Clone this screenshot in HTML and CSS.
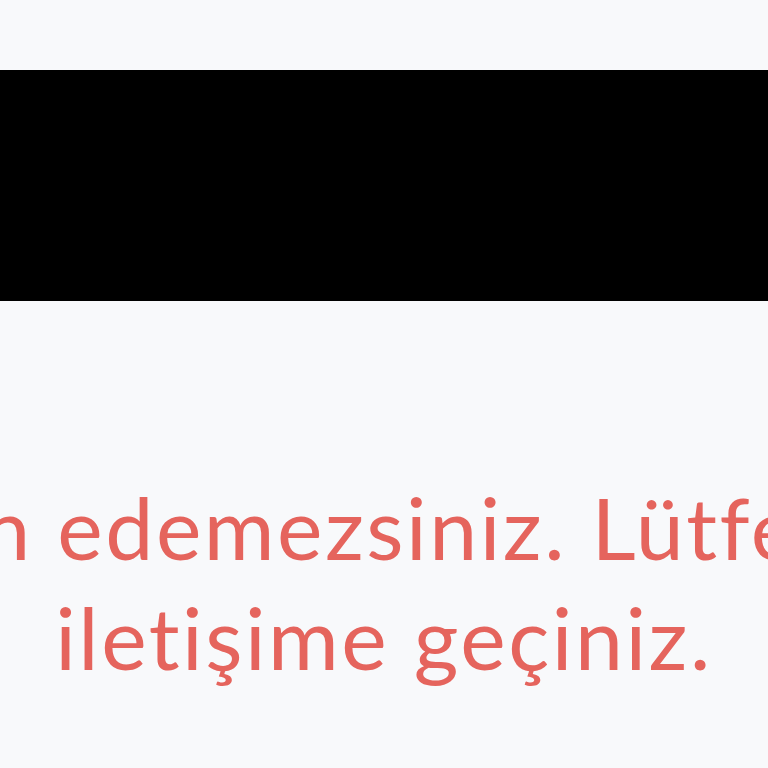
FILE: index.html
```html
<!DOCTYPE html>
<html lang="tr">
<head>
<meta charset="utf-8">
<title>Uyarı</title>
<link rel="stylesheet" href="styles.css">
</head>
<body>
<div class="page">
  <div class="media-bar"></div>
  <div class="notice">
    <p class="notice-line split"><span class="half left"><span class="part">Yetkili onayı almadan edemez</span></span><span class="half right"><span class="part">siniz. Lütfen yöneticinizle</span></span></p>
    <p class="notice-line">iletişime geçiniz.</p>
  </div>
</div>
</body>
</html>
```
FILE: styles.css
```css
html, body {
  margin: 0;
  padding: 0;
  background: #f8f9fb;
  overflow: hidden;
}
.page {
  width: 768px;
  height: 768px;
  padding-top: 70px;
  box-sizing: border-box;
  overflow: hidden;
}
.media-bar {
  height: 231px;
  background: #000;
}
.notice {
  margin-top: 171px;
  font-family: Lato, "Open Sans", sans-serif;
  font-size: 86px;
  line-height: 110px;
  letter-spacing: 2.5px;
  color: #e5645d;
  text-align: center;
}
.notice-line {
  margin: 0;
  white-space: nowrap;
}
.split {
  display: flex;
}
.half {
  display: flex;
  overflow: hidden;
}
.left {
  flex: 0 0 47.7%;
  justify-content: flex-end;
}
.right {
  flex: 1 1 auto;
  justify-content: flex-start;
}
.part {
  flex: none;
  white-space: nowrap;
}
```
